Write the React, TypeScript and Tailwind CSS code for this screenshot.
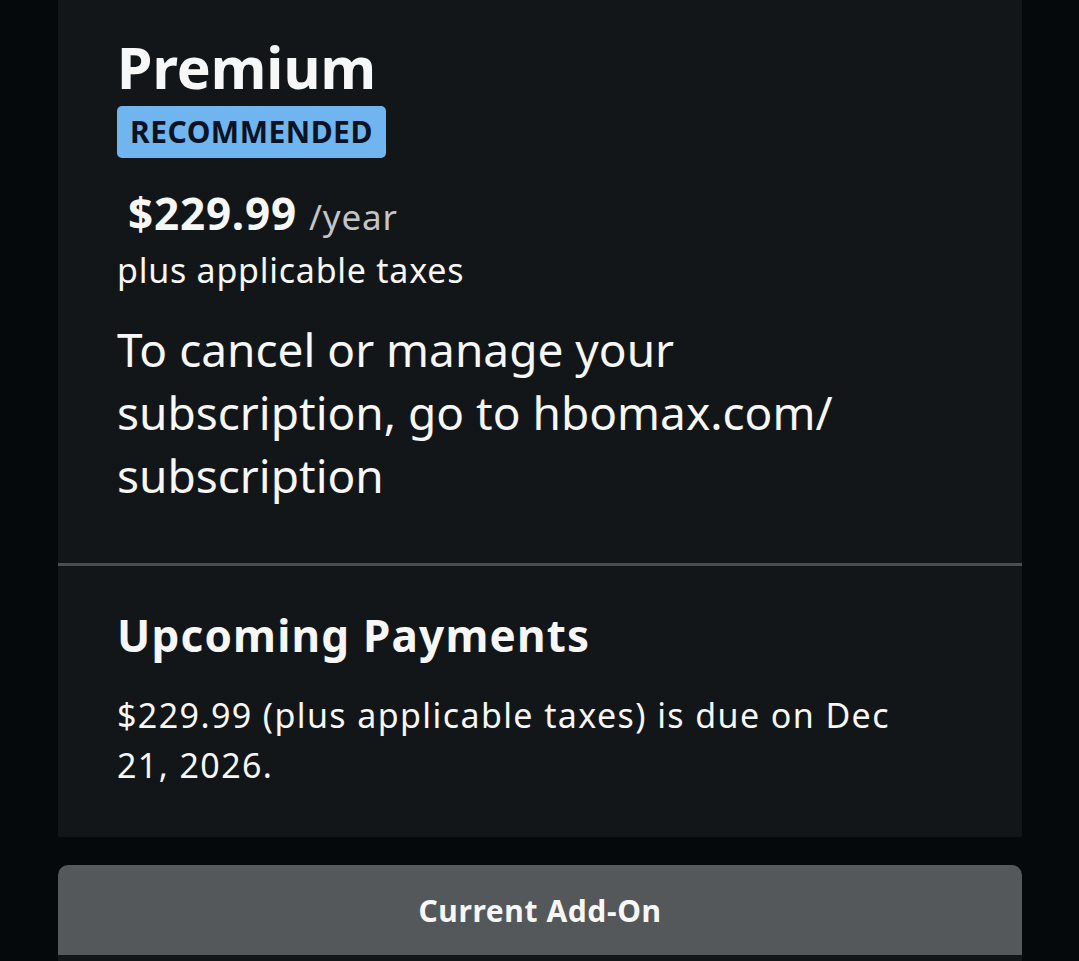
export default function App() {
  return (
    <div className="min-h-screen bg-[#06090b] text-[#f7f7f7]" style={{ fontFamily: '"Noto Sans", "Open Sans", sans-serif' }}>
      <div className="ml-[58px] w-[964px]">
        {/* Plan card */}
        <div className="bg-[#131618]">
          <div className="pl-[59px] pr-10 pt-[33px] pb-[56px]">
            <h1 className="text-[57px] leading-[68px] font-bold">Premium</h1>
            <div className="mt-[5px] w-fit h-[52px] rounded-[5px] bg-[#70b5ef] px-[13px] text-[30px] leading-[52px] font-bold tracking-[0.5px] text-[#0b1322]">
              RECOMMENDED
            </div>
            <div className="mt-[29px] ml-[11px] h-[56px] flex items-baseline gap-[12px] leading-[52px]">
              <span className="text-[44px] font-bold tracking-[0.8px]">$229.99</span>
              <span className="text-[35px] tracking-[0.8px] text-[#c3c5c7]">/year</span>
            </div>
            <p className="mt-[5px] text-[34px] leading-[44px] tracking-[0.75px]">plus applicable taxes</p>
            <p className="mt-[26px] w-[760px] text-[46px] leading-[63px]">
              To cancel or manage your subscription, go to hbomax.com/ subscription
            </p>
          </div>

          <div className="h-[3px] bg-[#4b4e51]" />

          <div className="pl-[59px] pr-10 pt-[40px] pb-[47px]">
            <h2 className="text-[44px] leading-[58px] font-bold tracking-[1.2px]">Upcoming Payments</h2>
            <p className="mt-[26px] w-[810px] text-[34px] leading-[50px] tracking-[1.4px]">
              $229.99 (plus applicable taxes) is due on Dec 21, 2026.
            </p>
          </div>
        </div>

        {/* Add-on */}
        <div className="mt-[28px] overflow-hidden rounded-t-[10px]">
          <div className="flex h-[90px] items-center justify-center bg-[#55585a] text-[30px] font-bold tracking-[0.6px]">
            Current Add-On
          </div>
          <div className="h-[40px] bg-[#131618]" />
        </div>
      </div>
    </div>
  )
}
